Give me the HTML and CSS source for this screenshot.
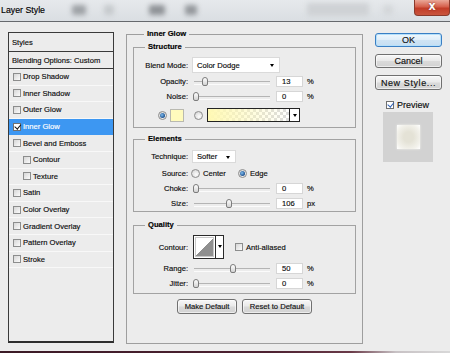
FILE: index.html
```html
<!DOCTYPE html>
<html lang="en">
<head>
    <meta charset="UTF-8">
    <title>Layer Style</title>
    <link rel="stylesheet" href="styles.css">
</head>
<body>
    <div class="dialog">
        <div class="titlebar">
            <span class="title">Layer Style</span>
            <span class="blob b1"></span>
            <span class="blob b2"></span>
            <span class="blob b3"></span>
            <span class="blob b4"></span>
            <span class="blob b5"></span>
            <span class="blob b6"></span>
            <span class="close-btn">x</span>
        </div>

        <div class="dialog-body">
            <ul class="style-list">
                <li class="head head-first">Styles</li>
                <li class="head">Blending Options: Custom</li>
                <li><span class="cb"></span>Drop Shadow</li>
                <li><span class="cb"></span>Inner Shadow</li>
                <li><span class="cb"></span>Outer Glow</li>
                <li class="active"><span class="cb checked"></span>Inner Glow</li>
                <li><span class="cb"></span>Bevel and Emboss</li>
                <li class="sub"><span class="cb"></span>Contour</li>
                <li class="sub"><span class="cb"></span>Texture</li>
                <li><span class="cb"></span>Satin</li>
                <li><span class="cb"></span>Color Overlay</li>
                <li><span class="cb"></span>Gradient Overlay</li>
                <li><span class="cb"></span>Pattern Overlay</li>
                <li><span class="cb"></span>Stroke</li>
            </ul>

            <fieldset class="group main-group">
                <legend>Inner Glow</legend>

                <fieldset class="group structure">
                    <legend>Structure</legend>
                    <div class="row row-blend">
                        <label class="lbl">Blend Mode:</label>
                        <div class="select select-blend">Color Dodge<span class="arrow"></span></div>
                    </div>
                    <div class="row row-field row-opacity">
                        <label class="lbl">Opacity:</label>
                        <div class="slider"><span class="thumb" style="left: 10px"></span></div>
                        <div class="num">13</div>
                        <span class="unit">%</span>
                    </div>
                    <div class="row row-field row-gap4">
                        <label class="lbl">Noise:</label>
                        <div class="slider"><span class="thumb" style="left: 1px"></span></div>
                        <div class="num">0</div>
                        <span class="unit">%</span>
                    </div>
                    <div class="row row-color">
                        <span class="radio on"></span>
                        <span class="swatch"></span>
                        <span class="radio radio-grad"></span>
                        <div class="gradient">
                            <span class="grad-fill"></span>
                            <span class="grad-arrow"><span class="arrow"></span></span>
                        </div>
                    </div>
                </fieldset>

                <fieldset class="group elements">
                    <legend>Elements</legend>
                    <div class="row row-technique">
                        <label class="lbl">Technique:</label>
                        <div class="select select-technique">Softer<span class="arrow"></span></div>
                    </div>
                    <div class="row row-source">
                        <label class="lbl">Source:</label>
                        <span class="opt opt-center"><span class="radio"></span>Center</span>
                        <span class="opt"><span class="radio on"></span>Edge</span>
                    </div>
                    <div class="row row-field row-choke">
                        <label class="lbl">Choke:</label>
                        <div class="slider"><span class="thumb" style="left: 1px"></span></div>
                        <div class="num">0</div>
                        <span class="unit">%</span>
                    </div>
                    <div class="row row-field row-gap4">
                        <label class="lbl">Size:</label>
                        <div class="slider"><span class="thumb" style="left: 34px"></span></div>
                        <div class="num">106</div>
                        <span class="unit">px</span>
                    </div>
                </fieldset>

                <fieldset class="group quality">
                    <legend>Quality</legend>
                    <div class="row row-contour">
                        <label class="lbl">Contour:</label>
                        <div class="contour">
                            <span class="curve"></span>
                            <span class="contour-arrow"><span class="arrow"></span></span>
                        </div>
                        <span class="cb cb-anti"></span>
                        <span class="anti-text">Anti-aliased</span>
                    </div>
                    <div class="row row-field row-gap4">
                        <label class="lbl">Range:</label>
                        <div class="slider"><span class="thumb" style="left: 38px"></span></div>
                        <div class="num">50</div>
                        <span class="unit">%</span>
                    </div>
                    <div class="row row-field row-gap4">
                        <label class="lbl">Jitter:</label>
                        <div class="slider"><span class="thumb" style="left: 1px"></span></div>
                        <div class="num">0</div>
                        <span class="unit">%</span>
                    </div>
                </fieldset>

                <div class="default-btns">
                    <button class="btn btn-make">Make Default</button>
                    <button class="btn btn-reset">Reset to Default</button>
                </div>
            </fieldset>

            <div class="side">
                <button class="btn side-btn ok-btn">OK</button>
                <button class="btn side-btn">Cancel</button>
                <button class="btn side-btn new-btn">New Style...</button>
                <div class="preview-row">
                    <span class="cb checked blue"></span>Preview
                </div>
                <div class="preview-box">
                    <span class="preview-square"></span>
                </div>
            </div>
        </div>

        <div class="bottom-strip"></div>
    </div>
</body>
</html>
```

FILE: styles.css
```css
* {
    box-sizing: border-box;
}
body {
    margin: 0;
    width: 450px;
    height: 353px;
    overflow: hidden;
    background: #ececec;
    font-family: 'Liberation Sans', Arial, sans-serif;
    font-size: 7.6px;
    color: #0c0c0c;
    -webkit-text-stroke: 0.15px currentColor;
}
.dialog {
    display: flex;
    flex-direction: column;
    height: 353px;
}

/* title bar */
.titlebar {
    height: 22px;
    display: flex;
    align-items: flex-start;
    background: linear-gradient(#e6e9ec, #dadee2);
    border-bottom: 1px solid #66696d;
    overflow: hidden;
}
.title {
    font-size: 8.8px;
    line-height: 20px;
    padding-left: 1px;
    color: #000;
    position: relative;
    z-index: 1;
}
.blob {
    display: block;
    height: 10px;
    margin-top: 5px;
    background: #a9adb1;
    filter: blur(2.5px);
    border-radius: 2px;
}
.b1 { width: 14px; margin-left: 27px; background: #9ea2a6; }
.b2 { width: 10px; margin-left: 18px; background: #c6cacd; }
.b3 { width: 16px; margin-left: 35px; background: #8f9397; }
.b4 { width: 12px; margin-left: 20px; background: #94989c; }
.b5 { width: 62px; margin-left: 110px; height: 13px; margin-top: 3px; background: #cfd2d5; }
.b6 { width: 10px; margin-left: 14px; background: #d4d7da; }
.close-btn {
    margin-left: auto;
    width: 36px;
    height: 16px;
    border: 1px solid #8a3a2c;
    border-top: none;
    border-radius: 0 0 4px 4px;
    background: linear-gradient(#eaa898, #d5604c 45%, #c23d28 55%, #c9553e);
    color: #fff;
    font-weight: bold;
    font-size: 12px;
    line-height: 13px;
    text-align: center;
    text-shadow: 0 0 2px #6a1a10;
}

.dialog-body {
    flex: 1;
    display: flex;
    align-items: flex-start;
}

/* styles list */
.style-list {
    list-style: none;
    margin: 10px 0 0 8px;
    padding: 0;
    width: 106px;
    height: 311px;
    border: 1px solid #3a3a3a;
    border-bottom: 2px solid #2e2e2e;
    background: #ececec;
}
.style-list li {
    display: flex;
    align-items: center;
    height: 16.6px;
    padding-left: 4px;
    border-bottom: 1px solid #f8f8f8;
    white-space: nowrap;
}
.style-list li.head {
    height: 17px;
    padding-left: 3px;
    border-bottom: 1px solid #3a3a3a;
}
.style-list li.head-first {
    height: 19px;
}
.style-list li.sub {
    padding-left: 14px;
}
.style-list li.active {
    background: #3d97f2;
    color: #fff;
    border-bottom-color: #3d97f2;
}
.cb {
    position: relative;
    display: inline-block;
    flex: none;
    width: 8px;
    height: 8px;
    margin-right: 2px;
    border: 1px solid #8c8d8d;
    background: linear-gradient(135deg, #d6d6d6, #fbfbfb);
}
.cb.checked {
    background: #fff;
    border-color: #6f7070;
}
.cb.checked::after {
    content: '';
    position: absolute;
    left: 1.5px;
    top: -0.5px;
    width: 2.5px;
    height: 4.5px;
    border: solid #111;
    border-width: 0 1.5px 1.5px 0;
    transform: rotate(40deg);
}
.cb.blue::after {
    border-color: #2b5fb5;
}

/* group boxes */
.group {
    margin: 0;
    padding: 0;
    min-width: 0;
    border: 1px solid #a2a2a2;
}
.group legend {
    margin-left: 11px;
    padding: 0 3px;
    font-weight: bold;
    line-height: 10px;
    color: #000;
}
.main-group {
    margin: 7px 0 0 12px;
    width: 237px;
    height: 315px;
    padding: 3px 6px 0 6px;
    border-color: #9e9e9e;
}
.structure {
    padding-bottom: 5px;
}
.elements {
    margin-top: 6px;
    padding-bottom: 2px;
}
.quality {
    margin-top: 8px;
    padding-bottom: 4px;
}

.row {
    display: flex;
    align-items: center;
}
.lbl {
    width: 54px;
    flex: none;
    text-align: right;
    white-space: nowrap;
}
.row-blend {
    height: 16px;
    margin-top: 5px;
}
.row-field {
    height: 11px;
}
.row-opacity {
    margin-top: 3px;
}
.row-gap4 {
    margin-top: 4px;
}
.row-choke {
    margin-top: 5px;
}

/* drop-down boxes */
.select {
    position: relative;
    margin-left: 4px;
    height: 100%;
    display: flex;
    align-items: center;
    padding-left: 4px;
    background: #fff;
    border: 1px solid #dadada;
}
.select-blend {
    width: 88px;
}
.select-technique {
    width: 44px;
}
.arrow {
    display: block;
    width: 0;
    height: 0;
    border-left: 2.5px solid transparent;
    border-right: 2.5px solid transparent;
    border-top: 3px solid #000;
}
.select .arrow {
    position: absolute;
    right: 5px;
    top: 50%;
    margin-top: -1px;
}

/* sliders */
.slider {
    position: relative;
    margin-left: 4px;
    width: 80px;
    height: 100%;
}
.slider::before {
    content: '';
    position: absolute;
    left: 2px;
    right: 2px;
    top: 5px;
    height: 2px;
    border-top: 1px solid #b4b4b4;
    border-bottom: 1px solid #fbfbfb;
}
.thumb {
    position: absolute;
    top: 1px;
    width: 6px;
    height: 9px;
    border: 1px solid #7c7c7c;
    border-radius: 3px 3px 2px 2px;
    background: linear-gradient(#ffffff, #d2d2d2);
}
.num {
    margin-left: 4px;
    width: 27px;
    height: 100%;
    padding-left: 5px;
    line-height: 9px;
    background: #fff;
    border: 1px solid #d6d6d6;
}
.unit {
    margin-left: 4px;
}

/* color row */
.row-color {
    height: 14px;
    margin-top: 6px;
    padding-left: 24px;
}
.radio {
    position: relative;
    display: inline-block;
    flex: none;
    width: 9px;
    height: 9px;
    border: 1px solid #8d8d8d;
    border-radius: 50%;
    background: radial-gradient(circle at 60% 65%, #fdfdfd, #d0d0d0);
}
.radio.on::after {
    content: '';
    position: absolute;
    left: 1px;
    top: 1px;
    width: 5px;
    height: 5px;
    border-radius: 50%;
    background: radial-gradient(circle at 40% 40%, #7fbdf0, #1c4f8c 70%);
}
.swatch {
    margin-left: 3px;
    width: 14px;
    height: 13px;
    background: #fffbbd;
    border: 1px solid #b9b9b0;
}
.radio-grad {
    margin-left: 10px;
}
.gradient {
    margin-left: 4px;
    width: 93px;
    height: 14px;
    display: flex;
    border: 1px solid #232323;
}
.grad-fill {
    flex: 1;
    background:
        linear-gradient(to right, #fff9b4 0%, rgba(255, 249, 180, 0.6) 40%, rgba(255, 249, 180, 0) 100%),
        conic-gradient(#dcdcdc 25%, #fff 0 50%, #dcdcdc 0 75%, #fff 0) 0 0 / 6px 6px;
}
.grad-arrow {
    width: 10px;
    display: flex;
    align-items: center;
    justify-content: center;
    background: #fff;
    border-left: 1px solid #232323;
}

/* elements */
.row-technique {
    height: 13px;
    margin-top: 6px;
}
.row-source {
    height: 10px;
    margin-top: 5px;
}
.opt {
    display: flex;
    align-items: center;
}
.opt .radio {
    margin-right: 3px;
}
.opt-center {
    margin-left: 3px;
    width: 47px;
}

/* quality */
.row-contour {
    height: 24px;
    margin-top: 5px;
}
.contour {
    margin-left: 5px;
    width: 31px;
    height: 24px;
    display: flex;
    border: 1px solid #2a2a2a;
    background: #fff;
}
.curve {
    flex: 1;
    margin: 1px;
    border: 1px solid #c8c8c8;
    background: linear-gradient(to top left, #8f8f8f 50%, #ffffff 50%);
}
.contour-arrow {
    width: 8px;
    display: flex;
    justify-content: center;
    padding-top: 9px;
    border-left: 1px solid #2a2a2a;
}
.cb-anti {
    margin-left: 11px;
    margin-right: 3px;
}

/* buttons */
.btn {
    font-family: 'Liberation Sans', Arial, sans-serif;
    font-size: 7.6px;
    color: #111;
    -webkit-text-stroke: 0.15px currentColor;
    padding: 0;
    border: 1px solid #707070;
    border-radius: 3px;
    background: linear-gradient(#f7f7f7, #e9e9e9 48%, #dadada 52%, #d2d2d2);
    box-shadow: inset 0 0 0 1px rgba(255, 255, 255, 0.6);
}
.default-btns {
    display: flex;
    justify-content: center;
    gap: 5px;
    margin-top: 5px;
}
.btn-make {
    width: 60px;
    height: 15px;
}
.btn-reset {
    width: 70px;
    height: 15px;
}

.side {
    display: flex;
    flex-direction: column;
    margin: 11px 0 0 12px;
    width: 67px;
    font-size: 9px;
}
.side-btn {
    height: 14px;
    margin-bottom: 7px;
    font-size: 9px;
    line-height: 12px;
}
.ok-btn {
    border-color: #3a7fc4;
    box-shadow: inset 0 0 0 1px #b6e0fa;
    background: linear-gradient(#f0f8fd, #e0eef9 48%, #cfe4f4 52%, #c6def2);
}
.new-btn {
    height: 15px;
    letter-spacing: 0.6px;
}
.preview-row {
    display: flex;
    align-items: center;
    height: 9px;
    margin: 3px 0 0 11px;
}
.preview-row .cb {
    margin-right: 3px;
}
.preview-box {
    margin: 3px 0 0 8px;
    width: 50px;
    height: 50px;
    display: flex;
    align-items: center;
    justify-content: center;
    background: #d2d2d2;
}
.preview-square {
    width: 23px;
    height: 24px;
    background: radial-gradient(#e4e2d6 30%, #f3f2ec 75%, #ffffff);
    box-shadow: 0 0 2px #f4f4f0;
}

.bottom-strip {
    height: 2px;
    background: linear-gradient(to right, #3b1a26, #4e2232 60%, #6a3a48 78%, #c8c2c5 88%, #d8d8d8);
}
```
